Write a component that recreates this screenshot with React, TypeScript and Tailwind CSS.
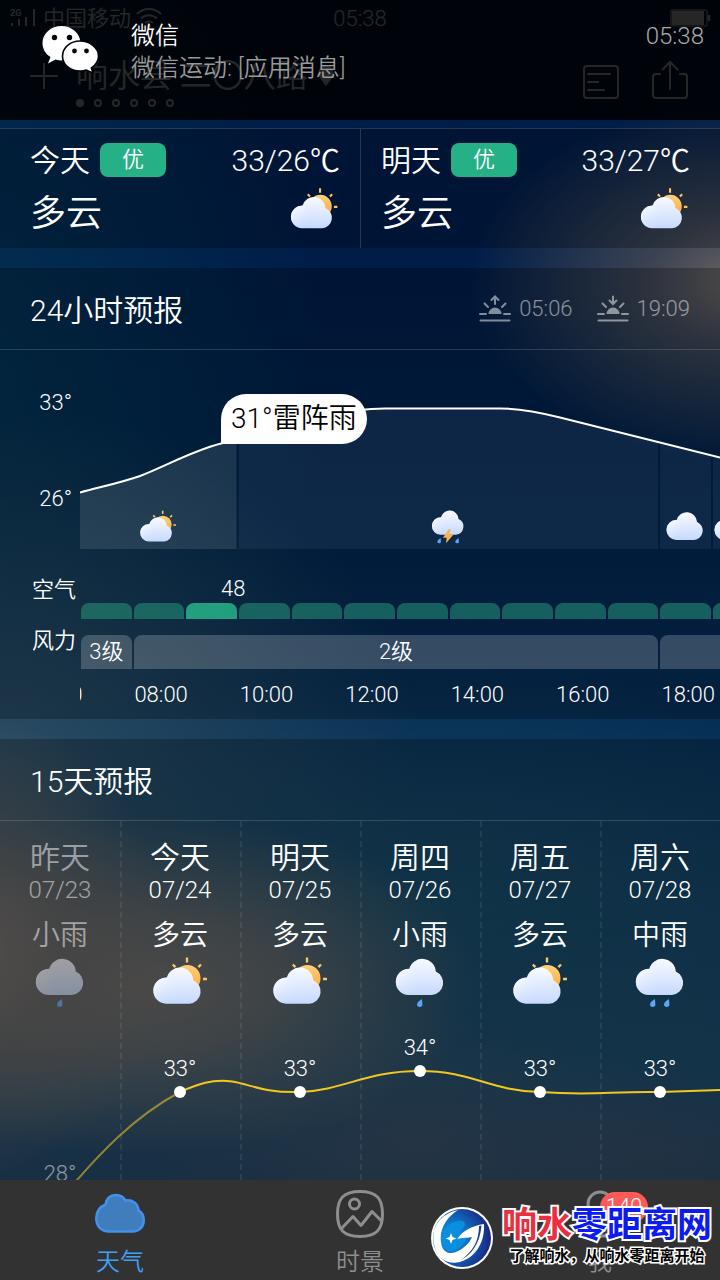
import React, { useId } from 'react';
import { clsx } from 'clsx';

type Weather = 'cloudy' | 'overcast' | 'lightRain' | 'rain' | 'thunder';

const outlook = [
  { day: '今天', air: '优', range: '33/26℃', text: '多云' },
  { day: '明天', air: '优', range: '33/27℃', text: '多云' },
];

const days: { name: string; date: string; text: string; icon: Weather; temp: number }[] = [
  { name: '昨天', date: '07/23', text: '小雨', icon: 'lightRain', temp: 28 },
  { name: '今天', date: '07/24', text: '多云', icon: 'cloudy', temp: 33 },
  { name: '明天', date: '07/25', text: '多云', icon: 'cloudy', temp: 33 },
  { name: '周四', date: '07/26', text: '小雨', icon: 'lightRain', temp: 34 },
  { name: '周五', date: '07/27', text: '多云', icon: 'cloudy', temp: 33 },
  { name: '周六', date: '07/28', text: '中雨', icon: 'rain', temp: 33 },
];

const hours = ['06:00', '08:00', '10:00', '12:00', '14:00', '16:00', '18:00'];
const airHours = Array.from({ length: 24 }, (_, i) => i);
const CURRENT_HOUR = 2;
const MAX_TEMP = 34;
const PX_PER_DEGREE = 21;

const Drop: React.FC<{ x: number; y: number }> = ({ x, y }) => (
  <path d={`M${x + 1.8} ${y}c-3 2-4.8 3.800-4.800 5.600a2.700 2.400 0 0 0 5.400 0c0-1.800-.2-3.600-.6-5.600z`} fill="#5aa5f5" />
);

const WeatherIcon: React.FC<{ kind: Weather; className?: string }> = ({ kind, className }) => {
  const id = useId();
  const sunny = kind === 'cloudy';
  return (
    <svg viewBox="0 0 60 52" className={className} aria-hidden="true">
      <defs>
        <linearGradient id={`${id}c`} x1="0" y1="0" x2="0" y2="1">
          <stop offset="0" stopColor="#f8faff" />
          <stop offset="1" stopColor="#c6d9fd" />
        </linearGradient>
        <linearGradient id={`${id}p`} x1="0" y1="0" x2="1" y2="1">
          <stop offset="0" stopColor="#ffffff" />
          <stop offset="0.8" stopColor="#d6e3fe" stopOpacity="0" />
        </linearGradient>
        <linearGradient id={`${id}s`} x1="0" y1="0" x2="0" y2="1">
          <stop offset="0" stopColor="#fdd07a" />
          <stop offset="1" stopColor="#fba63a" />
        </linearGradient>
      </defs>
      {sunny && (
        <g>
          <circle cx="37.300" cy="22.200" r="13.200" fill={`url(#${id}s)`} />
          <path d="M37 1.500v5M22.800 8.500l2.600 2.600M51 8.500l-2.600 2.600M53 23h4" stroke="#f9c665" strokeWidth="2.400" fill="none" />
        </g>
      )}
      <g transform={sunny ? undefined : 'translate(2.500 -8.700)'}>
        <path
          d="M16 47.700A13.100 13.100 0 0 1 16.800 21.500A13.500 13.500 0 0 1 43.300 24.200A12.300 12.300 0 0 1 39.500 47.700z"
          fill={`url(#${id}c)`}
        />
        <circle cx="16.200" cy="34.600" r="12.800" fill={`url(#${id}p)`} />
      </g>
      {kind === 'lightRain' && <Drop x={30} y={43} />}
      {kind === 'rain' && (
        <>
          <Drop x={23} y={43} />
          <Drop x={37} y={43} />
        </>
      )}
      {kind === 'thunder' && (
        <>
          <Drop x={17} y={44} />
          <Drop x={44} y={44} />
          <path d="M31 31l-8.500 12.500h5.500l-1 8.500l11-13h-6.500l3-8z" fill="#fbb24c" />
        </>
      )}
    </svg>
  );
};

const SunEvent: React.FC<{ time: string; set?: boolean }> = ({ time, set }) => (
  <div className="flex items-center gap-2 text-[22px] leading-6 text-white/50">
    <svg viewBox="0 0 32 28" className="h-7 w-8" fill="none" stroke="currentColor" strokeWidth="2" strokeLinecap="round" aria-hidden="true">
      <path d="M9.500 19a6.500 6.500 0 0 1 13 0z" fill="currentColor" stroke="none" />
      <path d="M1 19h6M25 19h6M5.500 8.500l3.500 3.500M26.500 8.500l-3.500 3.500M1.500 25.500h29" />
      <path d={set ? 'M16 1.500v7M12.500 5.500l3.500 3.500 3.500-3.500' : 'M16 9V2.500M12.500 5L16 1.500 19.500 5'} />
    </svg>
    <time>{time}</time>
  </div>
);

const TopBar: React.FC = () => (
  <header className="relative h-[120px] shrink-0 overflow-hidden">
    <div className="flex h-9 items-center px-2 text-[22px]">
      <svg viewBox="0 0 28 20" className="h-5 w-7" aria-hidden="true">
        <text x="2" y="8" fontSize="9" fontWeight="700" fill="#fff">2G</text>
        <path d="M4 15v3M11 11v7M18 9v9M26 1v17" stroke="#fff" strokeWidth="2" />
      </svg>
      <span className="ml-[7px]">中国移动</span>
      <svg viewBox="0 0 28 22" className="ml-1 h-6 w-7" fill="none" stroke="#fff" strokeWidth="2" aria-hidden="true">
        <path d="M2 7a17 17 0 0 1 24 0M6 11.500a11.500 11.500 0 0 1 16 0M10 16a6 6 0 0 1 8 0" />
        <circle cx="14" cy="19" r="1" fill="#fff" />
      </svg>
      <span className="absolute left-1/2 -translate-x-1/2">05:38</span>
      <svg viewBox="0 0 42 18" className="ml-auto h-[18px] w-[42px]" aria-hidden="true">
        <rect x="1" y="1" width="36" height="16" rx="2" fill="none" stroke="#fff" strokeOpacity="0.700" strokeWidth="1.500" />
        <rect x="2" y="2" width="32" height="14" fill="#fff" />
        <path d="M39 6v6" stroke="#fff" strokeWidth="2.500" />
      </svg>
    </div>
    <div className="flex items-start justify-between pt-1 pr-8 pl-[30px]">
      <div className="flex">
        <button type="button" aria-label="添加城市" className="mt-[22px] h-7">
          <svg viewBox="0 0 28 28" className="size-7" stroke="#fff" strokeWidth="2">
            <path d="M14 1v26M0 14h28" />
          </svg>
        </button>
        <div className="ml-[18px] pt-4">
          <h1 className="flex items-center gap-2 text-[32px] leading-10">
            响水县 二〇八路
            <svg viewBox="0 0 20 22" className="h-[22px] w-5" aria-hidden="true">
              <path d="M10 21C6 16 2.500 11.500 2.500 7.500a7.500 7 0 0 1 15 0C17.500 11.500 14 16 10 21z" fill="#fff" />
            </svg>
          </h1>
          <div className="mt-[3px] flex gap-[10px]">
            {[0, 1, 2, 3, 4, 5].map((dot) => (
              <span key={dot} className={clsx('size-2 rounded-full border-2 border-white', dot === 0 && 'bg-white')} />
            ))}
          </div>
        </div>
      </div>
      <div className="flex items-end gap-8 pt-5">
        <button type="button" aria-label="资讯">
          <svg viewBox="0 0 38 36" className="h-9 w-[38px]" fill="none" stroke="#fff" strokeWidth="2" strokeLinecap="round">
            <rect x="2" y="2" width="34" height="32" rx="3" />
            <path d="M6 10h22M6 18h10M6 26h16" />
          </svg>
        </button>
        <button type="button" aria-label="分享">
          <svg viewBox="0 0 36 40" className="h-10 w-9" fill="none" stroke="#fff" strokeWidth="2" strokeLinecap="round">
            <path d="M8 14H4a3 3 0 0 0-3 3v18a3 3 0 0 0 3 3h28a3 3 0 0 0 3-3V17a3 3 0 0 0-3-3h-4M18 29V2M10.500 9.500L18 2l7.500 7.500" />
          </svg>
        </button>
      </div>
    </div>

    {/* Incoming message banner */}
    <div role="status" className="absolute inset-0 flex items-start bg-black/85 pt-5 pr-4 pl-[42px] text-2xl">
      <svg viewBox="0 0 57 48" className="mt-[5px] h-12 w-[57px]" aria-hidden="true">
        <path d="M19.500 1C9 1 .5 8.500.5 18c0 6 3 11 8 14l-2.500 6.500 7.500-4c2 .7 4 1 6 1 10.500 0 19-7.700 19-17.300S30 1 19.500 1z" fill="#fff" />
        <path d="M38 16c-9.500 0-17.500 6.500-17.500 15.200S28.500 46 38 46c2.400 0 4.300-.3 6.300-1l7 3.300-2-5.300c4.500-3 7.200-7 7.200-12C56.500 22.500 47.500 16 38 16z" fill="#fff" stroke="#02040a" strokeWidth="1.600" />
        <circle cx="12.500" cy="12.500" r="2.700" fill="#02040a" />
        <circle cx="27.500" cy="12.500" r="2.700" fill="#02040a" />
        <circle cx="32.500" cy="26" r="2.400" fill="#02040a" />
        <circle cx="44.500" cy="26" r="2.400" fill="#02040a" />
      </svg>
      <div className="ml-8 leading-8">
        <p>微信</p>
        <p className="text-[#999999]">微信运动: [应用消息]</p>
      </div>
      <time className="ml-auto leading-8 text-[#aaaaaa]">05:38</time>
    </div>
  </header>
);

const HourlyPanel: React.FC = () => (
  <section className="mt-5 bg-black/25">
    <div className="flex h-[82px] items-center justify-between border-b border-white/15 px-[30px]">
      <h2 className="pt-1 text-3xl">24小时预报</h2>
      <div className="flex gap-6">
        <SunEvent time="05:06" />
        <SunEvent time="19:09" set />
      </div>
    </div>

    <div className="flex text-[22px] leading-6">
      <div className="w-20 shrink-0 pt-[41px] text-right">
        <p className="pr-2">33°</p>
        <p className="mt-[72px] pr-2">26°</p>
        <p className="mt-[67px] pr-1">空气</p>
        <p className="mt-[27px] pr-1">风力</p>
      </div>
      <div className="min-w-0 flex-1 overflow-hidden">
        <div className="relative h-[199px]">
          <svg viewBox="0 0 640 199" className="h-[199px] w-[640px]" aria-hidden="true">
            <path d="M0 143C20 137 40 133 60 126C88 116 112 100 141 94L156.500 91V199H0z" fill="#fff" fillOpacity="0.110" />
            <path d="M159 91C200 80 250 59 305 59H420C440 59 460 63 480 68L578 91.500V199H159z" fill="#8a9cc0" fillOpacity="0.100" />
            <path d="M580 92L631 104.500V199H580zM633 105L640 107V199H633z" fill="#8a9cc0" fillOpacity="0.100" />
            <path
              d="M0 142.500C20 137 40 133 60 126C88 115 112 101 141 93.500C190 82 250 58.500 305 58.500H420C440 58.500 460 62.500 480 67.500L640 107.500"
              fill="none"
              stroke="#fff"
              strokeWidth="2"
            />
          </svg>
          <p className="absolute top-11 left-[141px] rounded-[25px] rounded-bl-none bg-white px-[10px] text-[28px] leading-[50px] text-black">
            31°雷阵雨
          </p>
          <WeatherIcon kind="cloudy" className="absolute top-[159px] left-[58px] h-9 w-10" />
          <WeatherIcon kind="thunder" className="absolute top-[158px] left-[348px] h-9 w-10" />
          <WeatherIcon kind="overcast" className="absolute top-[160px] left-[582px] h-10 w-[46px]" />
          <WeatherIcon kind="overcast" className="absolute top-[160px] left-[630px] h-10 w-[46px]" />
        </div>

        <p className="mt-7 ml-[141px]">48</p>
        <div className="mt-[2px] ml-px grid w-[1262px] grid-cols-24 gap-[2px]">
          {airHours.map((hour) => (
            <span
              key={hour}
              className={clsx('h-4 rounded-t-lg', hour === CURRENT_HOUR ? 'bg-[#27b489]/85' : 'bg-[#27a080]/50')}
            />
          ))}
        </div>
        <div className="mt-4 ml-px grid h-[34px] w-[1262px] grid-cols-24 gap-[2px] text-center leading-[34px]">
          <span className="rounded-t-lg bg-white/20">3级</span>
          <span className="col-span-10 rounded-t-lg bg-white/20">2级</span>
          <span className="col-span-13 rounded-t-lg bg-white/20" />
        </div>
        <div className="mt-[14px] mb-3 -ml-[77px] grid w-[1265px] grid-cols-12 text-center">
          {hours.map((hour) => (
            <time key={hour}>{hour}</time>
          ))}
        </div>
      </div>
    </div>
  </section>
);

const DailyPanel: React.FC = () => (
  <section className="mt-5 bg-black/25">
    <div className="flex h-[82px] items-center border-b border-white/15 px-[30px]">
      <h2 className="pt-1 text-3xl">15天预报</h2>
    </div>
    <div className="relative grid h-[460px] grid-cols-6">
      <svg viewBox="0 0 720 200" preserveAspectRatio="none" className="absolute top-[187px] left-0 h-[200px] w-full" fill="none" stroke="#f2c81f" strokeWidth="2" aria-hidden="true">
        <path d="M60 192C100 144 135 108 180 84" strokeOpacity="0.550" />
        <path d="M180 84C198 76 212 71 232 73.500C250 76 262 85 300 84C345 82 365 63 420 63C472 63 490 83 540 84C595 88 610 83 660 84L720 82" />
      </svg>
      {days.map((day, index) => (
        <div
          key={day.date}
          className={clsx(
            'relative flex flex-col items-center pt-[19px]',
            index > 0 && 'border-l-2 border-dashed border-white/8 pr-[2px]'
          )}
        >
          <div className={clsx('flex flex-col items-center', index === 0 && 'opacity-50')}>
            <h3 className="text-3xl leading-9">{day.name}</h3>
            <time className="text-2xl leading-7">{day.date}</time>
            <p className="mt-4 text-[28px] leading-8">{day.text}</p>
            <WeatherIcon kind={day.icon} className="mt-1 h-[52px] w-[60px]" />
            <div className="flex flex-col items-center pt-7" style={{ marginTop: (MAX_TEMP - day.temp) * PX_PER_DEGREE }}>
              <span className="text-[22px] leading-6">{day.temp}°</span>
              <span className="mt-[5px] size-3 rounded-full bg-white" />
            </div>
          </div>
        </div>
      ))}
    </div>
  </section>
);

const SiteMark: React.FC = () => (
  <div className="absolute right-2 bottom-[10px] flex items-center gap-2">
    <svg viewBox="0 0 64 64" className="size-16" aria-hidden="true">
      <defs>
        <radialGradient id="markBlue" cx="0.300" cy="0.500" r="0.750">
          <stop offset="0" stopColor="#0ba6f0" />
          <stop offset="0.500" stopColor="#1263b8" />
          <stop offset="1" stopColor="#1b1b78" />
        </radialGradient>
      </defs>
      <circle cx="32" cy="32" r="31" fill="#fff" />
      <circle cx="32" cy="32" r="29" fill="url(#markBlue)" />
      <path d="M5 42C-1 22 10 8 28 4C17 11 9 23 11 36C12 46 19 49 26 46C33 43 39 38 42 31L27 33.500C33 24 42 20 54 18C55 36 46 51 30 56C18 59 8 53 5 42z" fill="#fff" />
      <path d="M12 33C12 24 18 17 27 15C35 14 37 18 33 22C30 25 28 28 26 33L37 31.500C33 40 26 46 19 45C14 44 12 39 12 33z" fill="#0b8edd" />
      <path d="M49 20C49 36 42 46 31 54C41 49 50 38 51.500 19.500z" fill="#1b3c98" />
      <path d="M21 27l1.500 4 4 1.500-4 1.500-1.500 4-1.500-4-4-1.500 4-1.500z" fill="#fff" />
    </svg>
    <div className="text-center font-bold [paint-order:stroke_fill]">
      <p className="text-[35px] leading-9 text-[#0c1cf0] [-webkit-text-stroke:4px_#fff]">
        <span className="text-[#ec2d40]">响水</span>零距离网
      </p>
      <p className="text-[15px] leading-6 text-black [-webkit-text-stroke:3px_#fff]">了解响水，从响水零距离开始</p>
    </div>
  </div>
);

const TabBar: React.FC = () => (
  <nav className="relative h-[100px] shrink-0 bg-[#323232] text-2xl leading-7 text-[#8e8e8e]">
    <div className="grid grid-cols-3">
      <a href="#weather" className="flex flex-col items-center pt-[10px] text-[#3fa0f5]">
        <svg viewBox="0 0 52 48" className="h-12 w-[52px]" aria-hidden="true">
          <path d="M15 41.500C7.500 41.500 2.300 36 2.300 28.500C2.300 22 5.500 17 11.500 14.500C12.500 8.500 16.500 5 22 5C26 5 29.500 7 31.500 10.500C38.500 9.500 44 13.500 44.500 20.500C48 22.500 49.700 26 49.700 30.500C49.700 37 45 41.500 38.500 41.500z" fill="#3f7dbd" stroke="#4292ea" strokeWidth="2.600" strokeLinejoin="round" />
        </svg>
        <span className="mt-[10px]">天气</span>
      </a>
      <a href="#scene" className="flex flex-col items-center pt-[10px]">
        <svg viewBox="0 0 48 48" className="size-12" fill="none" stroke="#8e8e8e" strokeWidth="3" strokeLinejoin="round" aria-hidden="true">
          <path d="M24 1.500C40 1.500 46.500 8 46.500 24S40 46.500 24 46.500 1.500 40 1.500 24 8 1.500 24 1.500z" />
          <circle cx="18.500" cy="14" r="5" />
          <path d="M5 39L17 26.500L25 35.500L36 21.500L46 31.500" />
        </svg>
        <span className="mt-[10px]">时景</span>
      </a>
      <a href="#me" className="relative flex flex-col items-center pt-[10px]">
        <svg viewBox="0 0 48 48" className="size-12" fill="none" stroke="#8e8e8e" strokeWidth="3" aria-hidden="true">
          <circle cx="24" cy="14" r="12" />
          <path d="M4 46C6 32 14 27 24 27S42 32 44 46z" />
        </svg>
        <span className="mt-[10px]">我</span>
        <span className="absolute top-3 left-1/2 w-12 rounded-full bg-[#ff5a5a] text-center text-[22px] leading-[30px] text-white">140</span>
      </a>
    </div>
    <SiteMark />
  </nav>
);

const App: React.FC = () => {
  return (
    <div className="flex h-screen flex-col overflow-hidden bg-[radial-gradient(ellipse_280px_180px_at_104%_22%,#6d6663_0%,#5c5858a8_35%,transparent_100%),radial-gradient(ellipse_200px_230px_at_-4%_74%,#6e6864_0%,#605d5cb0_45%,transparent_100%),radial-gradient(ellipse_340px_170px_at_20%_77%,#646260_0%,#605f5ecc_40%,transparent_100%),radial-gradient(ellipse_260px_130px_at_58%_89%,#424b5a80_0%,transparent_100%),radial-gradient(ellipse_160px_90px_at_92%_90%,#38455880_0%,transparent_100%),radial-gradient(ellipse_420px_360px_at_0%_60%,#2b4c62_0%,#28495ea0_45%,transparent_100%),radial-gradient(ellipse_360px_520px_at_-5%_30%,#06405890_0%,transparent_100%),radial-gradient(ellipse_480px_240px_at_60%_70%,#1a4860b0_0%,transparent_100%),linear-gradient(to_bottom,#001c48_0%,#001d48_22%,#00244c_40%,#062e56_57%,#103c5c_70%,#1b4562_84%,#223f5a_92%)] font-[Roboto,'Noto_Sans_CJK_SC',sans-serif] font-[350] text-white">
      <TopBar />
      <main className="min-h-0 flex-1 overflow-hidden pt-2">
        <section className="grid grid-cols-2 border-t border-white/15 bg-black/25">
          {outlook.map((item, index) => (
            <article
              key={item.day}
              className={clsx('pt-[14px] pb-4', index === 0 ? 'pr-5 pl-[30px]' : 'border-l border-white/15 pr-[30px] pl-5')}
            >
              <div className="flex h-[34px] items-center">
                <h2 className="pt-[2px] text-3xl">{item.day}</h2>
                <span className="ml-[10px] w-[66px] rounded-lg bg-[#26b085] text-center text-[22px] leading-[34px]">{item.air}</span>
                <span className="ml-auto pt-[2px] text-3xl">{item.range}</span>
              </div>
              <div className="mt-[15px] flex h-10 items-end justify-between">
                <p className="text-4xl leading-9">{item.text}</p>
                <WeatherIcon kind="cloudy" className="h-[45px] w-[52px]" />
              </div>
            </article>
          ))}
        </section>
        <HourlyPanel />
        <DailyPanel />
      </main>
      <TabBar />
    </div>
  );
};

export default App;
